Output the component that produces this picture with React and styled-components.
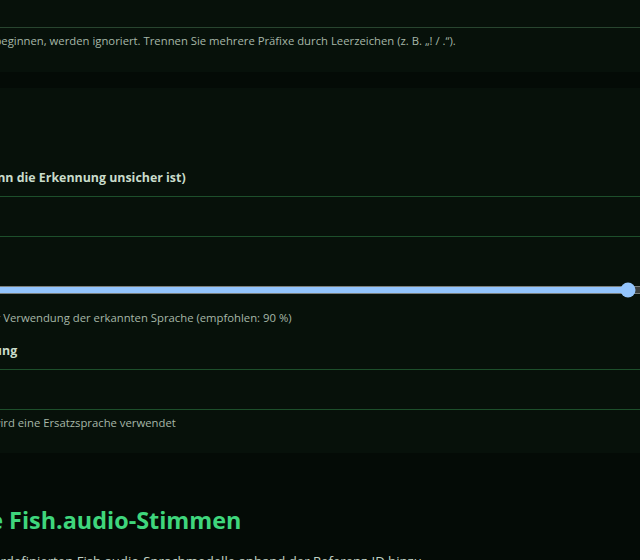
import React from "react";
import styled, { createGlobalStyle } from "styled-components";

const GlobalStyle = createGlobalStyle`
  html, body {
    margin: 0;
    padding: 0;
    background: #040b06;
    overflow: hidden;
  }
  body {
    font-family: "Open Sans", "Noto Sans", "DejaVu Sans", sans-serif;
    color: #c5d6c7;
  }
`;

const Page = styled.main`
  width: 990px;
  margin: -13px 0 0 -243px;
  display: flex;
  flex-direction: column;
`;

const Card = styled.section`
  background: #07110a;
  padding: ${(p) => p.$padding || "20px 24px"};
  margin-top: ${(p) => p.$gap || "0"};
  display: flex;
  flex-direction: column;
`;

const CardTitle = styled.h3`
  margin: 0 0 37px;
  font-size: 16px;
  line-height: 24px;
  font-weight: 700;
  color: #d2e4d4;
`;

const Field = styled.div`
  display: flex;
  flex-direction: column;
  & + & {
    margin-top: 16px;
  }
`;

const Label = styled.label`
  font-size: 12.4px;
  line-height: 18px;
  font-weight: 700;
  color: #c9dccb;
  white-space: nowrap;
  margin-bottom: 9px;
`;

const Input = styled.div`
  height: 39px;
  border: 1px solid ${(p) => (p.$dim ? "#28452f" : "#1d4f2b")};
  background: #07110a;
`;

const Help = styled.p`
  margin: ${(p) => p.$gap || "5px"} 0 0;
  font-size: 11.3px;
  line-height: 16px;
  color: #a6b7a8;
  white-space: nowrap;
`;

const Slider = styled.div`
  position: relative;
  height: 16px;
  display: flex;
  align-items: center;
  margin-top: 2px;
`;

const Track = styled.div`
  position: relative;
  flex: 1;
  height: 6px;
  border: 1px solid #7a7f7c;
  background: #3a3d3b;
`;

const Fill = styled.div`
  height: 100%;
  background: #93c5fd;
`;

const Thumb = styled.span`
  position: absolute;
  top: 50%;
  width: 15px;
  height: 15px;
  border-radius: 50%;
  background: #93c5fd;
  transform: translate(-50%, -50%);
`;

const SectionTitle = styled.h2`
  margin: 52px 0 0;
  padding: 0 24px;
  font-size: 23.4px;
  line-height: 30px;
  font-weight: 700;
  color: #3fd67c;
  white-space: nowrap;
`;

const SectionText = styled.p`
  margin: 16px 0 0;
  padding: 0 24px;
  font-size: 13.15px;
  line-height: 20px;
  color: #c3d3c5;
  white-space: nowrap;
`;

function Range({ value }) {
  return (
    <Slider>
      <Track>
        <Fill style={{ width: `${value}%` }} />
        <Thumb style={{ left: `${value}%` }} />
      </Track>
    </Slider>
  );
}

export default function App() {
  return (
    <>
      <GlobalStyle />
      <Page>
        <Card $padding="0 24px 23px">
          <Field>
            <Input $dim />
            <Help>
              Nachrichten, die mit einem Ihrer Präfixe beginnen, werden ignoriert.
              Trennen Sie mehrere Präfixe durch Leerzeichen (z. B. „! / .“).
            </Help>
          </Field>
        </Card>

        <Card $gap="16px" $padding="20px 24px 22px">
          <CardTitle>Spracherkennung</CardTitle>
          <Field>
            <Label>Standardsprache (wird genutzt, wenn die Erkennung unsicher ist)</Label>
            <Input />
          </Field>
          <Field>
            <Label>Schwelle: 90 %</Label>
            <Range value={90} />
            <Help $gap="12px">
              Erforderliche Konfidenz der Detektion vor Verwendung der erkannten Sprache
              (empfohlen: 90 %)
            </Help>
          </Field>
          <Field>
            <Label>Ersatzsprache bei unklarer Erkennung</Label>
            <Input />
            <Help>Wenn die Sprache nicht erkannt wurde, wird eine Ersatzsprache verwendet</Help>
          </Field>
        </Card>

        <SectionTitle>Benutzerdefinierte Fish.audio-Stimmen</SectionTitle>
        <SectionText>
          Fügen Sie hier Ihre eigenen benutzerdefinierten Fish.audio-Sprachmodelle anhand
          der Referenz-ID hinzu.
        </SectionText>
      </Page>
    </>
  );
}
